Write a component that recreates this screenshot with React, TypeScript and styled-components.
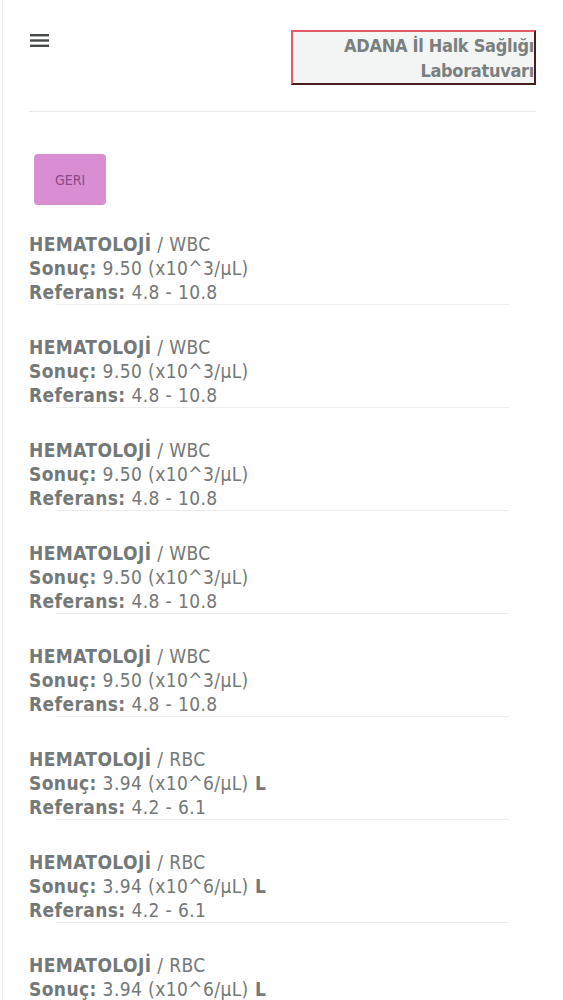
import React from "react";
import styled, { createGlobalStyle } from "styled-components";

interface Result {
  group: string;
  test: string;
  value: string;
  unit: string;
  flag?: string;
  range: string;
}

const wbc: Result = { group: "HEMATOLOJİ", test: "WBC", value: "9.50", unit: "(x10^3/µL)", range: "4.8 - 10.8" };
const rbc: Result = { group: "HEMATOLOJİ", test: "RBC", value: "3.94", unit: "(x10^6/µL)", flag: "L", range: "4.2 - 6.1" };

const results: Result[] = [wbc, wbc, wbc, wbc, wbc, rbc, rbc, rbc];

const GlobalStyle = createGlobalStyle`
  html, body {
    margin: 0;
    padding: 0;
    background: #ffffff;
  }
  body {
    font-family: "DejaVu Sans Condensed", "DejaVu Sans", sans-serif;
    color: #707575;
  }
`;

const App: React.FC = () => {
  return (
    <>
      <GlobalStyle />
      <Page>
        <Header>
          <MenuButton aria-label="menu">
            <svg width="20" height="16" viewBox="0 0 20 16">
              <rect x="0" y="2" width="19" height="2.4" fill="#454848" />
              <rect x="0" y="7.3" width="19" height="2.4" fill="#454848" />
              <rect x="0" y="12.6" width="19" height="2.4" fill="#454848" />
            </svg>
          </MenuButton>
          <TitleBox>
            ADANA İl Halk Sağlığı
            <br />
            Laboratuvarı
          </TitleBox>
        </Header>
        <Divider />
        <BackButton>GERI</BackButton>
        <List>
          {results.map((r, i) => (
            <Item key={i}>
              <Line>
                <Label>{r.group}</Label> / {r.test}
              </Line>
              <Line>
                <Label>Sonuç:</Label> {r.value} {r.unit}
                {r.flag && <Label> {r.flag}</Label>}
              </Line>
              <Line>
                <Label>Referans:</Label> {r.range}
              </Line>
              <ItemRule />
            </Item>
          ))}
        </List>
      </Page>
    </>
  );
};

export default App;

const Page = styled.div`
  min-height: 1000px;
  border-left: 1px solid #ececec;
  margin-left: 2px;
  padding: 0 27px 0 26px;
  overflow: hidden;
  box-sizing: border-box;
`;

const Header = styled.div`
  display: flex;
  justify-content: space-between;
  align-items: flex-start;
  padding-top: 30px;
  padding-left: 1px;
`;

const MenuButton = styled.div`
  width: 20px;
  height: 16px;
  margin-top: 2px;
  display: flex;
`;

const TitleBox = styled.div`
  width: 241px;
  height: 50px;
  border: 2px solid;
  border-color: #e25c68 #4b1d21 #4b1d21 #e25c68;
  background: #f3f4f4;
  text-align: right;
  font-weight: bold;
  font-size: 18px;
  line-height: 25px;
  color: #7a7f7f;
  letter-spacing: -0.3px;
  padding: 1px 0 0 0;
  white-space: nowrap;
  overflow: hidden;
`;

const Divider = styled.div`
  height: 1px;
  background: #e9e9e9;
  margin-top: 26px;
`;

const BackButton = styled.button`
  display: block;
  width: 72px;
  height: 51px;
  margin: 42px 0 0 5px;
  background: #d98ed3;
  border: none;
  border-radius: 4px;
  color: #874a86;
  font-family: "DejaVu Sans Condensed", "DejaVu Sans", sans-serif;
  font-size: 14px;
`;

const List = styled.div`
  display: flex;
  flex-direction: column;
  margin-top: 27px;
`;

const Item = styled.div`
  display: flex;
  flex-direction: column;
  margin-bottom: 30px;
`;

const Line = styled.div`
  font-size: 19px;
  line-height: 24px;
  letter-spacing: 0.4px;
  color: #737878;
  white-space: nowrap;
`;

const Label = styled.span`
  font-weight: bold;
`;

const ItemRule = styled.div`
  height: 1px;
  background: #ececec;
  margin: 0 0 0 27px;
  width: 453px;
`;
